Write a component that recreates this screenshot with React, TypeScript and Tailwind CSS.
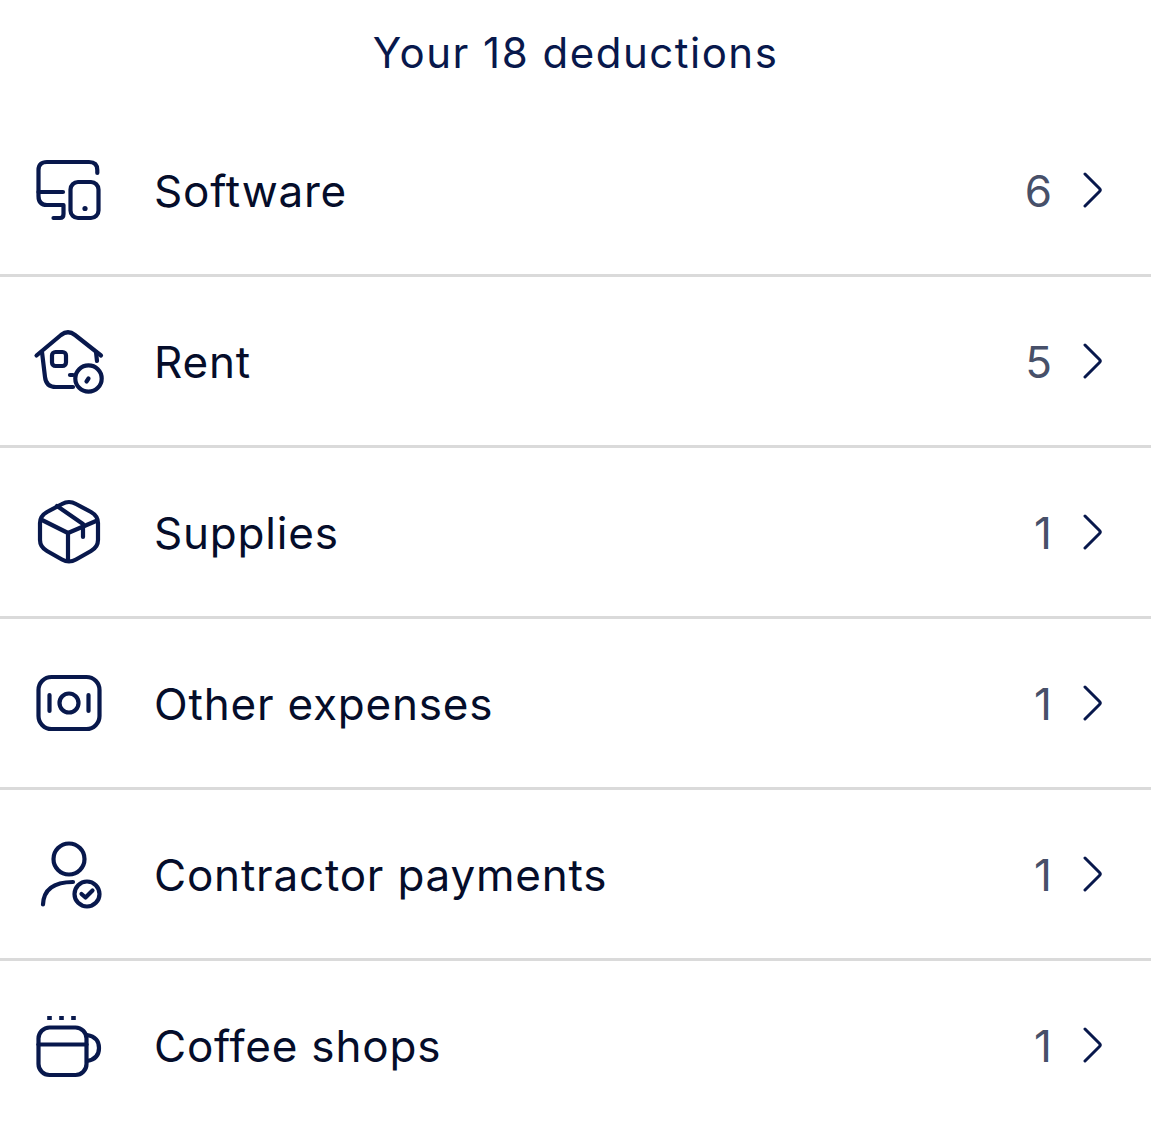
const stroke = "#08184c";

function Ico({ dy, children }: { dy: number; children: React.ReactNode }) {
  return (
    <svg width="100" height="100" viewBox="0 0 100 100" fill="none" stroke={stroke} strokeWidth="4.2" strokeLinecap="round" strokeLinejoin="round" className="shrink-0">
      <g transform={`translate(0 ${dy})`}>{children}</g>
    </svg>
  );
}

const icons = [
  <Ico key="a" dy={0}>
    <path d="M77.3 33V30Q77.3 22 69 22H27Q18.5 22 18.5 30V56Q18.5 65 27 65H43.5V74Q43.5 78 40 78H33.5" />
    <path d="M18.5 52H43" />
    <rect x="50.5" y="42" width="28" height="36" rx="7.5" />
    <circle cx="65" cy="68.5" r="2.6" fill={stroke} stroke="none" />
  </Ico>,
  <Ico key="b" dy={4}>
    <path d="M16.5 40.5L41 20Q48 14.5 55 20L81 40.5" />
    <path d="M22 37L25 62Q26 72 36 72H53" />
    <path d="M76 37L77 46" />
    <path d="M50 60H53" />
    <rect x="32" y="37" width="14" height="14" rx="3.5" />
    <circle cx="68.5" cy="63.5" r="13.2" />
    <path d="M66.5 66.5L68.5 63.5" />
  </Ico>,
  <Ico key="c" dy={3}>
    <path d="M42 19Q49 15 56 19L71 27Q78 31 78 38V55Q78 62 71 66L56 74.5Q49 78.5 42 74.5L27 66Q20 62 20 55V38Q20 31 27 27Z" />
    <path d="M22 35L48 48V76" />
    <path d="M48 48L76 36" />
    <path d="M37 21L63 39V52" />
  </Ico>,
  <Ico key="d" dy={2}>
    <rect x="18.5" y="22" width="61" height="52" rx="13" />
    <circle cx="49" cy="48" r="9.5" />
    <path d="M29.5 40V56" />
    <path d="M68.5 40V56" />
  </Ico>,
  <Ico key="e" dy={6}>
    <circle cx="49" cy="29" r="15.5" />
    <path d="M23 74.5Q24 52 53 52" />
    <circle cx="67" cy="64" r="12.5" />
    <path d="M61.5 64L65.5 67.5L72.5 60.5" />
  </Ico>,
  <Ico key="f" dy={5}>
    <rect x="18.5" y="27.5" width="48" height="47.5" rx="11" />
    <path d="M18.5 44.5H66.5" />
    <path d="M67 35Q79 37 79 48Q79 59 67 61" />
    <path d="M29.5 16V20M41.5 16V20M53.5 16V20" strokeWidth="4.6" strokeLinecap="butt" />
  </Ico>,
];

const rows = [
  ["Software", "6"],
  ["Rent", "5"],
  ["Supplies", "1"],
  ["Other expenses", "1"],
  ["Contractor payments", "1"],
  ["Coffee shops", "1"],
];

export default function App() {
  return (
    <div className="w-[1151px] h-[1123px] bg-white overflow-hidden font-['Inter',sans-serif]">
      <h1 className="h-[106px] pt-[26px] text-center text-[42px] leading-[54px] font-normal text-[#08184c] tracking-[1.5px]">
        Your 18 deductions
      </h1>
      {rows.map(([label, n], i) => (
        <div key={label} className={`flex items-center h-[171px] pl-[20px] border-b-[3px] ${i < 5 ? "border-[#dadada]" : "border-transparent"}`}>
          {icons[i]}
          <span className="ml-[34px] pt-[2px] text-[44px] leading-[50px] text-[#050d2a] tracking-[0.8px]">{label}</span>
          <span className="ml-auto pt-[2px] text-[44px] leading-[50px] text-[#475069]">{n}</span>
          <svg width="24" height="36" viewBox="0 0 24 36" fill="none" stroke="#08184c" strokeWidth="3" strokeLinecap="round" strokeLinejoin="round" className="ml-[30px] mr-[45px] shrink-0">
            <path d="M3 2L17.5 16.5Q19 18 17.5 19.5L3 34" />
          </svg>
        </div>
      ))}
    </div>
  );
}
